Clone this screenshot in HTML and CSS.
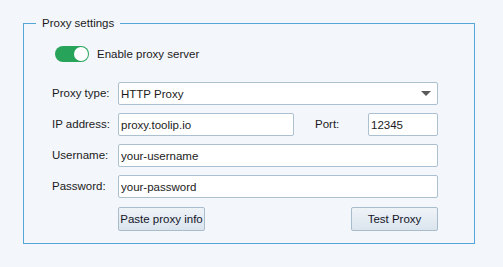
FILE: index.html
```html
<!DOCTYPE html>
<html lang="en">

<head>
    <meta charset="UTF-8">
    <title>Proxy settings</title>
    <link rel="stylesheet" href="styles.css">
</head>

<body>
    <fieldset class="group">
        <legend>Proxy settings</legend>

        <div class="toggle-row">
            <span class="switch"><span class="knob"></span></span>
            <span>Enable proxy server</span>
        </div>

        <div class="form">
            <label>Proxy type:</label>
            <div class="select wide">
                <span>HTTP Proxy</span>
                <span class="arrow"></span>
            </div>

            <label>IP address:</label>
            <input type="text" value="proxy.toolip.io">
            <label class="port-label">Port:</label>
            <input type="text" value="12345">

            <label>Username:</label>
            <input type="text" class="wide" value="your-username">

            <label>Password:</label>
            <input type="text" class="wide" value="your-password">

            <div class="buttons">
                <button type="button">Paste proxy info</button>
                <button type="button">Test Proxy</button>
            </div>
        </div>
    </fieldset>
</body>

</html>
```

FILE: styles.css
```css
body {
    margin: 0;
    background-color: #f3f6fb;
    font-family: "Liberation Sans", Arial, sans-serif;
    font-size: 11.5px;
    color: #1b1b1b;
}

.group {
    margin: 16px 0 0 23px;
    width: 452px;
    height: 228px;
    padding: 0;
    border: 1px solid #55a6d6;
    box-sizing: border-box;
}

.group legend {
    margin-left: 12px;
    padding: 0 6px;
    line-height: 14px;
}

.toggle-row {
    display: flex;
    align-items: center;
    gap: 8px;
    margin: 16px 0 0 31px;
}

.switch {
    display: inline-flex;
    align-items: center;
    justify-content: flex-end;
    width: 34px;
    height: 16px;
    border-radius: 8px;
    background-color: #27a45a;
    box-sizing: border-box;
    padding: 1px;
}

.knob {
    width: 14px;
    height: 14px;
    border-radius: 50%;
    background-color: #ffffff;
}

.form {
    display: grid;
    grid-template-columns: 66px 176px 74px 70px;
    row-gap: 8px;
    align-items: center;
    margin: 20px 0 0 28px;
}

.form label {
    line-height: 23px;
}

.form .port-label {
    padding-left: 21px;
}

.form input,
.select {
    height: 23px;
    margin: 0;
    padding: 0 2px;
    border: 1px solid #abc0d0;
    border-radius: 2px;
    background-color: #ffffff;
    box-sizing: border-box;
    font-family: inherit;
    font-size: 11.5px;
    color: #1b1b1b;
}

.wide {
    grid-column: 2 / 5;
}

.select {
    display: flex;
    align-items: center;
    justify-content: space-between;
    padding-right: 6px;
}

.arrow {
    width: 0;
    height: 0;
    border-left: 5px solid transparent;
    border-right: 5px solid transparent;
    border-top: 5px solid #5a5a5a;
}

.buttons {
    grid-column: 2 / 5;
    display: flex;
    justify-content: space-between;
    margin-top: 1px;
}

.buttons button {
    width: 87px;
    height: 24px;
    padding: 0;
    border: 1px solid #a9bccb;
    border-radius: 2px;
    background: linear-gradient(#eef3f7, #dbe5ee);
    font-family: inherit;
    font-size: 11.5px;
    color: #14142a;
    white-space: nowrap;
}
```
